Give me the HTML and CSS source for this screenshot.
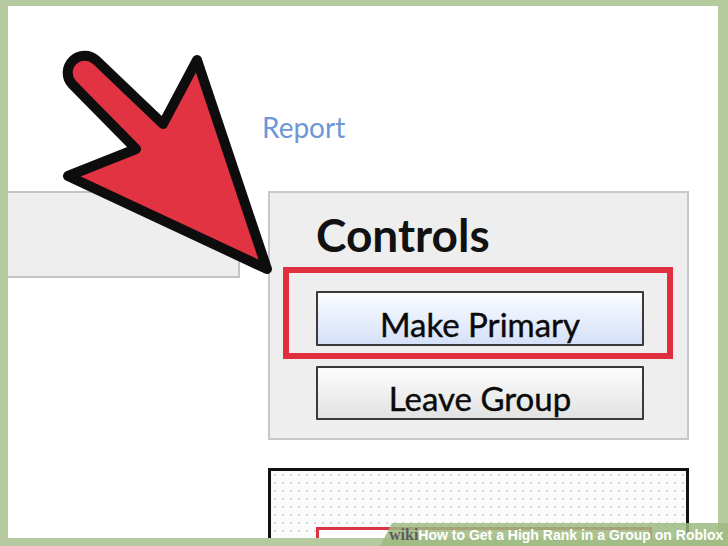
FILE: index.html
```html
<!DOCTYPE html>
<html lang="en">
<head>
    <meta charset="UTF-8">
    <meta name="viewport" content="width=device-width, initial-scale=1.0">
    <title>Group Controls</title>
    <link rel="stylesheet" href="styles.css">
</head>
<body>
    <div class="frame">
        <div class="canvas">
            <div class="report-row">
                <a class="report" href="#">Report</a>
            </div>
            <div class="main">
                <!-- cut-off panel on the left -->
                <div class="side-panel"></div>
                <div class="controls">
                    <h2>Controls</h2>
                    <div class="highlight">
                        <button class="btn btn-primary">Make Primary</button>
                    </div>
                    <button class="btn btn-leave">Leave Group</button>
                </div>
            </div>
            <div class="bottom-box">
                <div class="inner-red"></div>
            </div>
        </div>
    </div>

    <!-- pointer arrow drawn over the page -->
    <svg class="arrow" width="728" height="546" viewBox="0 0 728 546">
        <path d="M72,84 A17,17 0 0 1 96,60 L163,124 L197,60 L267,269 L68,176 L136,149 Z"
              fill="#e23343" stroke="#0d0d0d" stroke-width="10" stroke-linejoin="round"/>
    </svg>

    <div class="watermark"><span class="wiki">wiki</span><b>How</b> to Get a High Rank in a Group on Roblox</div>
</body>
</html>
```

FILE: styles.css
```css
body {
    margin: 0;
    padding: 0;
    width: 728px;
    height: 546px;
    overflow: hidden;
    position: relative;
    background-color: #b5cb9f; /* green frame */
    font-family: Lato, "Open Sans", sans-serif;
}
.frame {
    padding: 6px 10px 8px 8px;
    height: 546px;
    box-sizing: border-box;
}
.canvas {
    background-color: #ffffff;
    height: 532px;
    overflow: hidden;
}
.report-row {
    height: 185px;
    padding-left: 254px;
    padding-top: 104px;
    box-sizing: border-box;
}
.report {
    color: #6d97d6;
    font-size: 28px;
    text-decoration: none;
}
.main {
    display: flex;
    align-items: flex-start;
    gap: 28px;
}
.side-panel {
    width: 232px;
    height: 87px;
    box-sizing: border-box;
    background-color: #eeeeee;
    border: 2px solid #c4c4c4;
    border-left: none;
}
.controls {
    width: 421px;
    height: 249px;
    box-sizing: border-box;
    background-color: #eeeeee;
    border: 2px solid #c8c8c8;
    padding: 14px 0 0 13px;
}
.controls h2 {
    margin: 0 0 5px 33px;
    font-size: 46px;
    line-height: 55px;
    font-weight: bold;
    color: #111111;
}
.highlight {
    width: 390px;
    height: 92px;
    box-sizing: border-box;
    border: 6px solid #e0303f;
    padding: 18px 23px 7px 27px;
}
.btn {
    display: block;
    width: 328px;
    height: 55px;
    box-sizing: border-box;
    border: 2px solid #3a3a3a;
    border-radius: 1px;
    padding: 11px 0 0;
    font-family: Lato, "Open Sans", sans-serif;
    font-size: 33px;
    line-height: 33px;
    color: #0a0a0a;
    text-align: center;
    -webkit-text-stroke: 0.4px #0a0a0a;
}
.btn-primary {
    background: linear-gradient(#fbfcff, #d5e1f8);
}
.btn-leave {
    height: 54px;
    margin: 7px 0 0 33px;
    background: linear-gradient(#fdfdfd, #e2e2e2);
}
.bottom-box {
    width: 421px;
    height: 120px;
    box-sizing: border-box;
    margin: 28px 0 0 260px;
    border: 3px solid #111111;
    background-color: #fbfbfb;
    background-image: radial-gradient(circle, #d8d8d8 1px, transparent 1.6px);
    background-size: 8px 8px;
    padding: 56px 0 0 45px;
}
.inner-red {
    width: 330px;
    height: 60px;
    border: 3px solid #d93444;
    background-color: #ffffff;
}
.arrow {
    position: absolute;
    left: 0;
    top: 0;
    pointer-events: none;
}
.watermark {
    position: absolute;
    left: 380px;
    bottom: 0;
    width: 348px;
    height: 23px;
    box-sizing: border-box;
    padding: 3px 0 0 9px;
    background-color: rgba(158, 186, 128, 0.85);
    clip-path: polygon(12px 0, 100% 0, 100% 100%, 0 100%);
    font-family: "Liberation Sans", Arial, sans-serif;
    font-size: 14px;
    font-weight: bold;
    color: #ffffff;
    white-space: nowrap;
}
.watermark .wiki {
    font-family: "Liberation Serif", serif;
    color: #5c5c5c;
    font-size: 16px;
}
```
